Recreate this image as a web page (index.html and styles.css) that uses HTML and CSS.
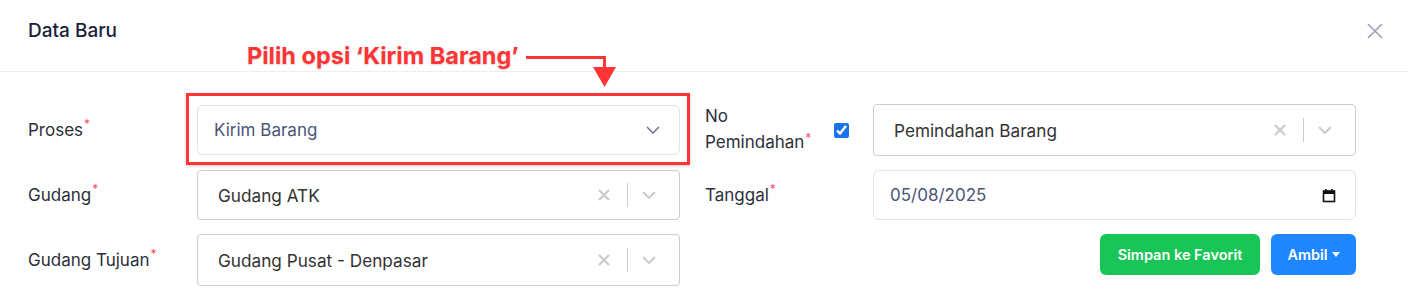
FILE: index.html
```html
<!DOCTYPE html>
<html lang="en">
<head>
  <meta charset="UTF-8">
  <title>Data Baru</title>
  <link rel="stylesheet" href="styles.css">
</head>
<body>
  <div class="modal">
    <div class="modal-header">
      <h5 class="modal-title">Data Baru</h5>
      <button class="btn-close" aria-label="Close">
        <svg width="16" height="16" viewBox="0 0 16 16"><path d="M1 1L15 15M15 1L1 15" stroke="#9aa0b8" stroke-width="1.6" fill="none"/></svg>
      </button>
    </div>
    <div class="modal-body">
      <div class="form-row">
        <label class="form-label">Proses<span class="req">*</span></label>
        <div class="native-select">
          <span>Kirim Barang</span>
          <svg class="chev" width="14" height="8" viewBox="0 0 14 8"><path d="M1 1L7 7L13 1" stroke="#6b7490" stroke-width="1.5" fill="none"/></svg>
        </div>
        <label class="form-label right">
          <span class="two-line">No<br>Pemindahan<span class="req">*</span></span>
          <input type="checkbox" class="check" checked>
        </label>
        <div class="rselect tall">
          <span class="value">Pemindahan Barang</span>
          <span class="indicators">
            <svg width="14" height="14" viewBox="0 0 14 14"><path d="M2 2L12 12M12 2L2 12" stroke="#cccccc" stroke-width="2.4" fill="none"/></svg>
            <span class="sep"></span>
            <svg width="14" height="8" viewBox="0 0 14 8"><path d="M1 1L7 7L13 1" stroke="#cccccc" stroke-width="2" fill="none"/></svg>
          </span>
        </div>
      </div>
      <div class="form-row">
        <label class="form-label">Gudang<span class="req">*</span></label>
        <div class="rselect">
          <span class="value">Gudang ATK</span>
          <span class="indicators">
            <svg width="14" height="14" viewBox="0 0 14 14"><path d="M2 2L12 12M12 2L2 12" stroke="#cccccc" stroke-width="2.4" fill="none"/></svg>
            <span class="sep"></span>
            <svg width="14" height="8" viewBox="0 0 14 8"><path d="M1 1L7 7L13 1" stroke="#cccccc" stroke-width="2" fill="none"/></svg>
          </span>
        </div>
        <label class="form-label right">Tanggal<span class="req">*</span></label>
        <div class="date-input">
          <span>05/08/2025</span>
          <svg width="14" height="15" viewBox="0 0 14 15"><rect x="1.5" y="3" width="11" height="10.5" fill="none" stroke="#111" stroke-width="1.6"/><rect x="1.5" y="3" width="11" height="3" fill="#111"/><path d="M4 1V3M10 1V3" stroke="#111" stroke-width="1.6"/></svg>
        </div>
      </div>
      <div class="form-row last">
        <label class="form-label">Gudang Tujuan<span class="req">*</span></label>
        <div class="rselect tall">
          <span class="value">Gudang Pusat - Denpasar</span>
          <span class="indicators">
            <svg width="14" height="14" viewBox="0 0 14 14"><path d="M2 2L12 12M12 2L2 12" stroke="#cccccc" stroke-width="2.4" fill="none"/></svg>
            <span class="sep"></span>
            <svg width="14" height="8" viewBox="0 0 14 8"><path d="M1 1L7 7L13 1" stroke="#cccccc" stroke-width="2" fill="none"/></svg>
          </span>
        </div>
        <div class="actions">
          <button class="btn btn-green">Simpan ke Favorit</button>
          <button class="btn btn-blue">Ambil<span class="caret"></span></button>
        </div>
      </div>
    </div>

    <!-- annotation overlay -->
    <div class="note-text">Pilih opsi ‘Kirim Barang’</div>
    <svg class="note-arrow" width="100" height="40" viewBox="0 0 100 40">
      <path d="M0 12.5H78.5V24" stroke="#ff3535" stroke-width="3" fill="none"/>
      <path d="M67 22H90L78.5 42Z" fill="#ff3535"/>
    </svg>
    <div class="note-box"></div>
  </div>
</body>
</html>
```

FILE: styles.css
```css
body {
  margin: 0;
  font-family: 'Inter', 'Liberation Sans', sans-serif;
  background: #fff;
  color: #2b2f3a;
}
.modal {
  position: relative;
  width: 1408px;
  height: 289px;
  overflow: hidden;
}
.modal-header {
  display: flex;
  align-items: center;
  justify-content: space-between;
  height: 72px;
  padding: 0 25px 10px 28px;
  box-sizing: border-box;
  border-bottom: 1px solid #eceef2;
}
.modal-title {
  margin: 0;
  font-size: 19px;
  font-weight: 500;
  color: #1a2238;
}
.btn-close {
  border: none;
  background: none;
  padding: 0;
  width: 16px;
  height: 16px;
  cursor: pointer;
}
.modal-body {
  padding: 31px 52px 0 28px;
  display: flex;
  flex-direction: column;
  gap: 13px;
}
.form-row {
  display: grid;
  grid-template-columns: 169px 483px 193px 483px;
  align-items: center;
}
.form-row.last {
  margin-top: 1px;
}
.form-label {
  font-size: 17px;
  color: #2b2f3a;
  display: flex;
  align-items: center;
}
.form-label.right {
  padding-left: 25px;
}
.req {
  color: #ff4b6e;
  font-size: 12px;
  align-self: flex-start;
  position: relative;
  top: -4px;
  margin-left: 1px;
}
.two-line .req {
  top: -6px;
}
.two-line {
  line-height: 26px;
  width: 129px;
}
.check {
  width: 15px;
  height: 15px;
  margin: 0;
  accent-color: #1a73e8;
}
.native-select {
  display: flex;
  align-items: center;
  justify-content: space-between;
  height: 50px;
  box-sizing: border-box;
  border: 1px solid #dfe2ef;
  border-radius: 6px;
  padding: 0 19px 0 16px;
  font-size: 17px;
  color: #4a5576;
}
.rselect {
  display: flex;
  align-items: center;
  justify-content: space-between;
  height: 50px;
  box-sizing: border-box;
  border: 1px solid #cccccc;
  border-radius: 4px;
  padding: 0 23px 0 20px;
  font-size: 17.2px;
  color: #333;
}
.rselect.tall {
  height: 52px;
}
.indicators {
  display: flex;
  align-items: center;
}
.sep {
  width: 1px;
  height: 24px;
  background: #cccccc;
  margin: 0 14px 0 16px;
}
.date-input {
  display: flex;
  align-items: center;
  justify-content: space-between;
  height: 50px;
  box-sizing: border-box;
  border: 1px solid #dfe2ef;
  border-radius: 6px;
  padding: 0 19px 0 16px;
  font-size: 17px;
  color: #4a5576;
}
.actions {
  grid-column: 3 / 5;
  display: flex;
  justify-content: flex-end;
  gap: 11px;
  align-self: start;
}
.btn {
  height: 41px;
  border: none;
  border-radius: 6px;
  color: #fff;
  font-family: 'Inter', 'Liberation Sans', sans-serif;
  font-weight: 600;
  font-size: 14.5px;
  white-space: nowrap;
  padding: 0;
  cursor: pointer;
}
.btn-green {
  width: 160px;
  background: #19c557;
}
.btn-blue {
  width: 85px;
  background: #1e86ff;
}
.caret {
  display: inline-block;
  border-top: 5px solid #fff;
  border-left: 4px solid transparent;
  border-right: 4px solid transparent;
  vertical-align: 3px;
  margin-left: 4px;
}
.note-text {
  position: absolute;
  left: 247px;
  top: 41px;
  font-size: 23.5px;
  font-weight: 700;
  color: #ff3535;
  text-shadow: 0 1px 2px rgba(0, 0, 0, 0.18);
}
.note-arrow {
  position: absolute;
  left: 526px;
  top: 45px;
  overflow: visible;
}
.note-box {
  position: absolute;
  left: 186px;
  top: 93px;
  width: 504px;
  height: 72px;
  box-sizing: border-box;
  border: 3px solid #ff3535;
  box-shadow: 0 1px 3px rgba(0, 0, 0, 0.2);
}
```
